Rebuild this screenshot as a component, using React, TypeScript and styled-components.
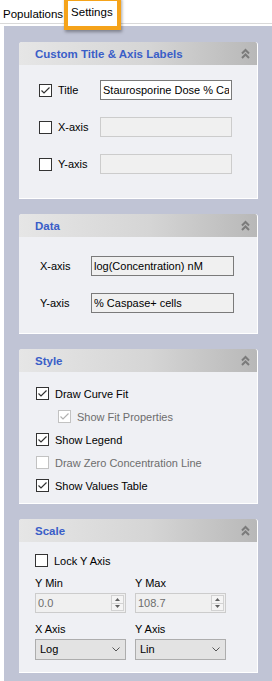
import React from "react";
import styled, { createGlobalStyle } from "styled-components";

// Global
const GlobalStyle = createGlobalStyle`
  html, body {
    margin: 0;
    padding: 0;
    background: #ffffff;
    font-family: "Liberation Sans", Arial, sans-serif;
    font-size: 11px;
    color: #000;
  }
  * { box-sizing: border-box; }
`;

// Tabs
const TabStrip = styled.div`
  position: relative;
  display: flex;
  align-items: flex-end;
  height: 24px;
  border-bottom: 1px solid #d9d9d9;
`;

const Tab = styled.div<{ $active?: boolean }>`
  position: relative;
  height: ${(p) => (p.$active ? "24px" : "20px")};
  margin-bottom: ${(p) => (p.$active ? "-1px" : "0")};
  padding: ${(p) => (p.$active ? "3px 5px 0 4px" : "3px 3px 0 3px")};
  background: ${(p) => (p.$active ? "#ffffff" : "transparent")};
  border: ${(p) => (p.$active ? "1px solid #d9d9d9" : "none")};
  border-bottom: none;
  font-size: 11.5px;
  line-height: 16px;
  white-space: nowrap;
`;

const TabHighlight = styled.div`
  position: absolute;
  left: -3px;
  right: -3px;
  top: -4px;
  bottom: -6px;
  border: 4px solid #f5a31a;
  box-shadow: 1px 2px 3px rgba(0, 0, 0, 0.35);
  pointer-events: none;
`;

// Layout
const Panel = styled.div`
  margin: 2px 0 0 4px;
  min-height: 654px;
  background: #c0c4d5;
  padding: 16px 14px 9px 15px;
  display: flex;
  flex-direction: column;
  gap: 15px;
`;

const Card = styled.section`
  background: #eff0f4;
  border-right: 1px solid #ffffff;
  border-bottom: 1px solid #ffffff;
  border-radius: 3px 3px 0 0;
  overflow: hidden;
`;

const CardHeader = styled.div`
  display: flex;
  align-items: center;
  justify-content: space-between;
  height: 23px;
  padding: 0 7px 0 16px;
  background: linear-gradient(to right, #e6e6e6 0%, #d5d5d5 55%, #b8b8b8 100%);
  color: #3a5ec8;
  font-weight: bold;
  font-size: 11.5px;
`;

const CardBody = styled.div<{ $pad: string; $gap: number }>`
  display: flex;
  flex-direction: column;
  padding: ${(p) => p.$pad};
  gap: ${(p) => p.$gap}px;
`;

const Row = styled.div`
  display: flex;
  align-items: center;
  height: 20px;
`;

const CheckRow = styled.label<{ $indent?: number; $disabled?: boolean; $height?: number }>`
  display: flex;
  align-items: center;
  gap: 6px;
  height: ${(p) => p.$height ?? 23}px;
  padding-left: ${(p) => p.$indent ?? 0}px;
  color: ${(p) => (p.$disabled ? "#6d6d6d" : "#000")};
`;

const CheckLabel = styled.label<{ $width: number }>`
  display: flex;
  align-items: center;
  gap: 6px;
  width: ${(p) => p.$width}px;
  flex-shrink: 0;
`;

const PlainLabel = styled.span<{ $width: number }>`
  width: ${(p) => p.$width}px;
  flex-shrink: 0;
`;

const TextBox = styled.input<{ $width: number; $white?: boolean; $off?: boolean }>`
  width: ${(p) => p.$width}px;
  height: 20px;
  margin: 0;
  padding: 0 2px;
  border: 1px solid ${(p) => (p.$off ? "#cccccc" : "#7a7a7a")};
  border-radius: 0;
  background: ${(p) => (p.$white ? "#ffffff" : "#f0f0f0")};
  font-family: inherit;
  font-size: 11px;
  color: #000;
  outline: none;
`;

// Checkbox
const Box = styled.span<{ $disabled?: boolean }>`
  display: inline-flex;
  width: 13px;
  height: 13px;
  flex-shrink: 0;
  border: 1px solid ${(p) => (p.$disabled ? "#c2c2c2" : "#333333")};
  background: #ffffff;
`;

const CheckBox: React.FC<{ checked?: boolean; disabled?: boolean }> = ({ checked, disabled }) => (
  <Box $disabled={disabled}>
    {checked && (
      <svg width="11" height="11" viewBox="0 0 11 11">
        <path
          d="M1.5 5.5 L4 8 L9.5 2.5"
          fill="none"
          stroke={disabled ? "#b0b0b0" : "#333333"}
          strokeWidth="1.2"
        />
      </svg>
    )}
  </Box>
);

const CollapseIcon: React.FC = () => (
  <svg width="9" height="11" viewBox="0 0 9 11">
    <path d="M1 5.5 L4.5 2 L8 5.5 M1 10 L4.5 6.5 L8 10" fill="none" stroke="#7b7b7b" strokeWidth="2" />
  </svg>
);

// Scale controls
const Grid = styled.div`
  display: grid;
  grid-template-columns: 91px 91px;
  column-gap: 9px;
  row-gap: 10px;
  margin-top: 9px;
`;

const Field = styled.div`
  display: flex;
  flex-direction: column;
  gap: 3px;
  line-height: 13px;
`;

const Spin = styled.div`
  display: flex;
  align-items: center;
  height: 20px;
  border: 1px solid #cccccc;
  background: #f0f0f0;
  color: #6d6d6d;
  padding: 0 1px 0 2px;
`;

const SpinValue = styled.span`
  flex: 1;
`;

const SpinButtons = styled.div`
  display: flex;
  flex-direction: column;
  width: 13px;
  height: 16px;
  border: 1px solid #d2d2d2;
  background: #f4f4f4;
`;

const SpinHalf = styled.div<{ $top?: boolean }>`
  flex: 1;
  display: flex;
  align-items: center;
  justify-content: center;
  border-bottom: ${(p) => (p.$top ? "1px solid #d2d2d2" : "none")};
`;

const Select = styled.div`
  display: flex;
  align-items: center;
  justify-content: space-between;
  height: 21px;
  padding: 0 5px 0 4px;
  border: 1px solid #adadad;
  background: #e3e3e3;
`;

const SpinBox: React.FC<{ value: string }> = ({ value }) => (
  <Spin>
    <SpinValue>{value}</SpinValue>
    <SpinButtons>
      <SpinHalf $top>
        <svg width="5" height="3" viewBox="0 0 5 3"><path d="M0 3 L2.5 0 L5 3 Z" fill="#606060" /></svg>
      </SpinHalf>
      <SpinHalf>
        <svg width="5" height="3" viewBox="0 0 5 3"><path d="M0 0 L2.5 3 L5 0 Z" fill="#606060" /></svg>
      </SpinHalf>
    </SpinButtons>
  </Spin>
);

const Dropdown: React.FC<{ value: string }> = ({ value }) => (
  <Select>
    <span>{value}</span>
    <svg width="8" height="5" viewBox="0 0 8 5">
      <path d="M0.5 0.5 L4 4 L7.5 0.5" fill="none" stroke="#555" strokeWidth="1" />
    </svg>
  </Select>
);

const Section: React.FC<{ title: string; children: React.ReactNode }> = ({ title, children }) => (
  <Card>
    <CardHeader>
      <span>{title}</span>
      <CollapseIcon />
    </CardHeader>
    {children}
  </Card>
);

export default function App() {
  return (
    <>
      <GlobalStyle />
      <TabStrip>
        <Tab>Populations</Tab>
        <Tab $active>
          Settings
          <TabHighlight />
        </Tab>
      </TabStrip>

      <Panel>
        <Section title="Custom Title & Axis Labels">
          <CardBody $pad="15px 0 24px 20px" $gap={17}>
            <Row>
              <CheckLabel $width={61}><CheckBox checked />Title</CheckLabel>
              <TextBox $width={132} $white readOnly value="Staurosporine Dose % Caspase+ cells" />
            </Row>
            <Row>
              <CheckLabel $width={61}><CheckBox />X-axis</CheckLabel>
              <TextBox $width={132} $off readOnly value="" />
            </Row>
            <Row>
              <CheckLabel $width={61}><CheckBox />Y-axis</CheckLabel>
              <TextBox $width={132} $off readOnly value="" />
            </Row>
          </CardBody>
        </Section>

        <Section title="Data">
          <CardBody $pad="19px 0 20px 21px" $gap={17}>
            <Row>
              <PlainLabel $width={51}>X-axis</PlainLabel>
              <TextBox $width={143} readOnly value="log(Concentration) nM" />
            </Row>
            <Row>
              <PlainLabel $width={51}>Y-axis</PlainLabel>
              <TextBox $width={143} readOnly value="% Caspase+ cells" />
            </Row>
          </CardBody>
        </Section>

        <Section title="Style">
          <CardBody $pad="10px 0 6px 17px" $gap={0}>
            <CheckRow><CheckBox checked />Draw Curve Fit</CheckRow>
            <CheckRow $indent={22} $disabled><CheckBox checked disabled />Show Fit Properties</CheckRow>
            <CheckRow><CheckBox checked />Show Legend</CheckRow>
            <CheckRow $disabled><CheckBox disabled />Draw Zero Concentration Line</CheckRow>
            <CheckRow><CheckBox checked />Show Values Table</CheckRow>
          </CardBody>
        </Section>

        <Section title="Scale">
          <CardBody $pad="11px 0 12px 16px" $gap={0}>
            <CheckRow $height={15}><CheckBox />Lock Y Axis</CheckRow>
            <Grid>
              <Field>
                <span>Y Min</span>
                <SpinBox value="0.0" />
              </Field>
              <Field>
                <span>Y Max</span>
                <SpinBox value="108.7" />
              </Field>
              <Field>
                <span>X Axis</span>
                <Dropdown value="Log" />
              </Field>
              <Field>
                <span>Y Axis</span>
                <Dropdown value="Lin" />
              </Field>
            </Grid>
          </CardBody>
        </Section>
      </Panel>
    </>
  );
}
